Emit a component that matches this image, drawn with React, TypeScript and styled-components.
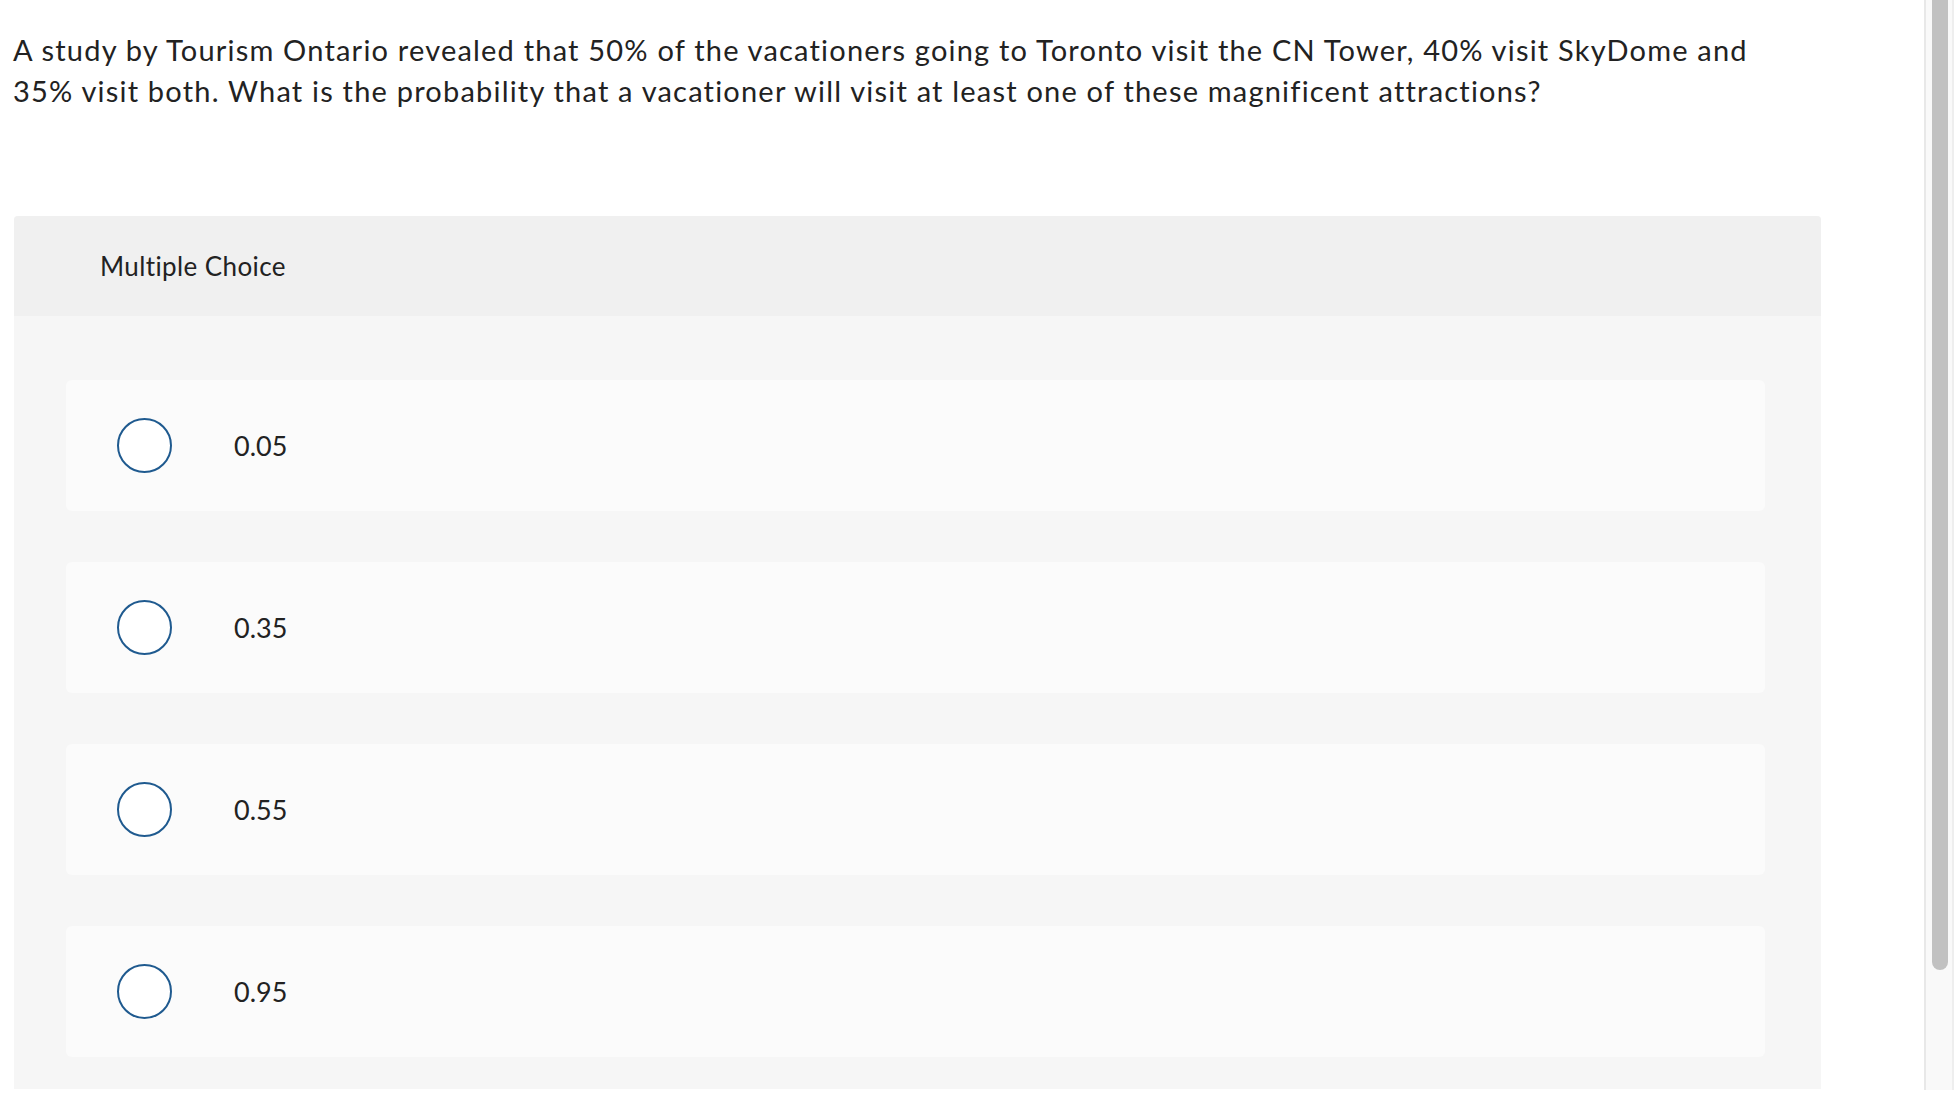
import React from 'react';
import styled, { createGlobalStyle } from 'styled-components';

const GlobalStyle = createGlobalStyle`
  html, body {
    margin: 0;
    padding: 0;
    background: #ffffff;
  }
  body {
    font-family: Lato, "Open Sans", "Liberation Sans", sans-serif;
    color: #212121;
  }
`;

const Page = styled.div`
  display: flex;
  width: 1956px;
  height: 1090px;
  overflow: hidden;
`;

const Main = styled.main`
  flex: 1;
  min-width: 0;
  padding: 29px 0 0 13px;
  overflow: hidden;
`;

const Question = styled.p`
  margin: 0;
  width: 1780px;
  font-size: 29px;
  line-height: 41px;
  letter-spacing: 1.2px;
  color: #222222;
`;

const Card = styled.section`
  width: 1807px;
  margin: 105px 0 0 1px;
  border-radius: 4px 4px 0 0;
  background: #f6f6f6;
  overflow: hidden;
`;

const CardHeader = styled.header`
  display: flex;
  align-items: center;
  height: 100px;
  padding-left: 86px;
  background: #f0f0f0;
  font-size: 26px;
  letter-spacing: 0.4px;
  color: #222222;
`;

const Choices = styled.ul`
  list-style: none;
  margin: 0;
  padding: 64px 56px 32px 52px;
  display: flex;
  flex-direction: column;
  gap: 51px;
`;

const Choice = styled.li`
  display: flex;
  align-items: center;
  height: 131px;
  padding-left: 51px;
  border-radius: 6px;
  background: #fbfbfb;
  cursor: pointer;
`;

const Radio = styled.span`
  box-sizing: border-box;
  flex: none;
  width: 55px;
  height: 55px;
  border-radius: 50%;
  border: 2px solid #1f5a8f;
  background: #ffffff;
`;

const ChoiceLabel = styled.span`
  margin-left: 62px;
  font-size: 27px;
  color: #222222;
`;

const ScrollRail = styled.div`
  box-sizing: border-box;
  flex: none;
  width: 30px;
  margin-right: 2px;
  padding-left: 6px;
  border-left: 2px solid #e8e8e8;
  border-right: 2px solid #eeeeee;
  background: #f9f9f9;
`;

const ScrollThumb = styled.div`
  width: 16px;
  height: 970px;
  border-radius: 0 0 8px 8px;
  background: #c1c1c1;
`;

const choices = ['0.05', '0.35', '0.55', '0.95'];

export default function App() {
  return (
    <>
      <GlobalStyle />
      <Page>
        <Main>
          <Question>
            A study by Tourism Ontario revealed that 50% of the vacationers going to Toronto visit the CN
            Tower, 40% visit SkyDome and 35% visit both. What is the probability that a vacationer will
            visit at least one of these magnificent attractions?
          </Question>
          <Card>
            <CardHeader>Multiple Choice</CardHeader>
            <Choices>
              {choices.map((c) => (
                <Choice key={c}>
                  <Radio />
                  <ChoiceLabel>{c}</ChoiceLabel>
                </Choice>
              ))}
            </Choices>
          </Card>
        </Main>
        <ScrollRail>
          <ScrollThumb />
        </ScrollRail>
      </Page>
    </>
  );
}
